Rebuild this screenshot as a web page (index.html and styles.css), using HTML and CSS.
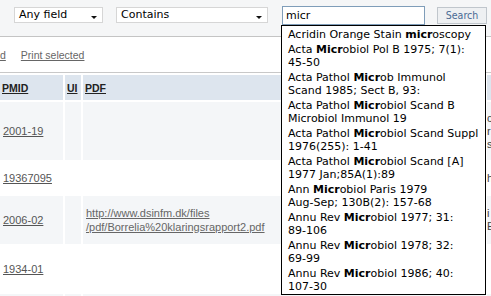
FILE: index.html
```html
<!DOCTYPE html>
<html>
<head>
<meta charset="utf-8">
<link rel="stylesheet" href="styles.css">
</head>
<body>
<div class="topbar">
  <div class="select field-select"><span>Any field</span><i class="arrow"></i></div>
  <div class="select op-select"><span>Contains</span><i class="arrow"></i></div>
  <div class="search-input">micr</div>
  <button class="search-btn">Search</button>
</div>
<div class="toolbar">
  <a class="tool-link tail">d</a>
  <a class="tool-link">Print selected</a>
</div>
<div class="results">
  <div class="cell head"><a>PMID</a></div>
  <div class="cell head"><a>UI</a></div>
  <div class="cell head"><a>PDF</a></div>
  <div class="cell head"></div>

  <div class="cell alt"><a>2001-19</a></div>
  <div class="cell alt"></div>
  <div class="cell alt"></div>
  <div class="cell alt extra"><span>c<br>r<br>s</span></div>

  <div class="cell"><a>19367095</a></div>
  <div class="cell"></div>
  <div class="cell"></div>
  <div class="cell extra"><span>h</span></div>

  <div class="cell alt"><a>2006-02</a></div>
  <div class="cell alt"></div>
  <div class="cell alt url"><a>http://www.dsinfm.dk/files<br>/pdf/Borrelia%20klaringsrapport2.pdf</a></div>
  <div class="cell alt extra"><span>i<br>E</span></div>

  <div class="cell"><a>1934-01</a></div>
  <div class="cell"></div>
  <div class="cell"></div>
  <div class="cell extra"></div>

  <div class="cell alt"></div>
  <div class="cell alt"></div>
  <div class="cell alt"></div>
  <div class="cell alt"></div>
</div>

<ul class="suggest">
  <li>Acridin Orange Stain <b>micr</b>oscopy</li>
  <li>Acta <b>Micr</b>obiol Pol B 1975; 7(1):<br>45-50</li>
  <li>Acta Pathol <b>Micr</b>ob Immunol<br>Scand 1985; Sect B, 93:</li>
  <li>Acta Pathol <b>Micr</b>obiol Scand B<br>Microbiol Immunol 19</li>
  <li>Acta Pathol <b>Micr</b>obiol Scand Suppl<br>1976(255): 1-41</li>
  <li>Acta Pathol <b>Micr</b>obiol Scand [A]<br>1977 Jan;85A(1):89</li>
  <li>Ann <b>Micr</b>obiol Paris 1979<br>Aug-Sep; 130B(2): 157-68</li>
  <li>Annu Rev <b>Micr</b>obiol 1977; 31:<br>89-106</li>
  <li>Annu Rev <b>Micr</b>obiol 1978; 32:<br>69-99</li>
  <li>Annu Rev <b>Micr</b>obiol 1986; 40:<br>107-30</li>
</ul>
</body>
</html>
```
FILE: styles.css
```css
html, body {
  margin: 0;
  padding: 0;
  background: #fff;
  overflow: hidden;
}
body {
  font-family: "Liberation Sans", Arial, sans-serif;
  font-size: 11px;
  color: #555;
  position: relative;
  width: 491px;
  height: 296px;
}

/* top search bar */
.topbar {
  height: 29px;
  padding: 7px 0 0 14px;
  background: #f5f6f7;
  border-bottom: 1px solid #c4c4c4;
  display: flex;
  align-items: flex-start;
  font-family: "DejaVu Sans", Verdana, sans-serif;
  font-size: 11px;
  color: #000;
}
.select {
  box-sizing: border-box;
  height: 16px;
  background: #fff;
  border: 1px solid #d6d6d6;
  display: flex;
  align-items: center;
  padding-left: 4px;
  line-height: 14px;
  position: relative;
}
.field-select { width: 89px; margin-right: 13px; }
.op-select { width: 152px; margin-right: 14px; }
.arrow {
  position: absolute;
  top: 8px;
  right: 5px;
  width: 0;
  height: 0;
  border-left: 3px solid transparent;
  border-right: 3px solid transparent;
  border-top: 3px solid #111;
}
.search-input {
  box-sizing: border-box;
  width: 143px;
  height: 19px;
  margin-top: -1px;
  margin-right: 12px;
  border: 1px solid #7f9db9;
  background: #fff;
  padding: 1px 3px 0;
  line-height: 15px;
}
.search-btn {
  box-sizing: border-box;
  width: 50px;
  height: 17px;
  margin: 0;
  padding: 0;
  border: 1px solid #c0c6cc;
  background: #eef0f2;
  color: #4a6a94;
  font-family: "DejaVu Sans Condensed", "DejaVu Sans", sans-serif;
  font-size: 10.5px;
  line-height: 15px;
}

/* toolbar */
.toolbar {
  height: 35px;
  border-bottom: 1px solid #c8c8c8;
  display: flex;
  align-items: center;
  font-size: 10.5px;
  color: #666;
}
.tool-link {
  text-decoration: underline;
  color: #666;
}
.tail { margin-left: 0; margin-right: 15px; }

/* results grid */
.results {
  margin-top: 2px;
  display: grid;
  grid-template-columns: 63px 16px 402px 60px;
  grid-template-rows: 25px 58px 32px 48px 46px 20px;
  gap: 2px;
}
.cell {
  display: flex;
  align-items: center;
  padding-left: 3px;
  overflow: hidden;
  white-space: nowrap;
}
.cell a {
  color: #555;
  text-decoration: underline;
}
.head {
  background: #dde5ee;
  padding-left: 2px;
}
.head a {
  font-weight: bold;
  color: #222;
  font-size: 10.5px;
}
.alt { background: #f4f6f8; }
.url {
  line-height: 14px;
}
.url a { color: #666; }
.extra {
  padding-left: 0;
  color: #444;
  line-height: 13px;
}

/* suggestion dropdown */
.suggest {
  position: absolute;
  left: 281px;
  top: 25px;
  width: 203px;
  margin: 0;
  padding: 1px 0 0;
  list-style: none;
  background: #fff;
  border: 1px solid #000;
  font-family: "DejaVu Sans", Verdana, sans-serif;
  font-size: 11px;
  line-height: 13px;
  color: #000;
  z-index: 5;
}
.suggest li {
  padding: 1px 0 1px 6px;
  white-space: nowrap;
}
.suggest b { font-weight: bold; }
```
